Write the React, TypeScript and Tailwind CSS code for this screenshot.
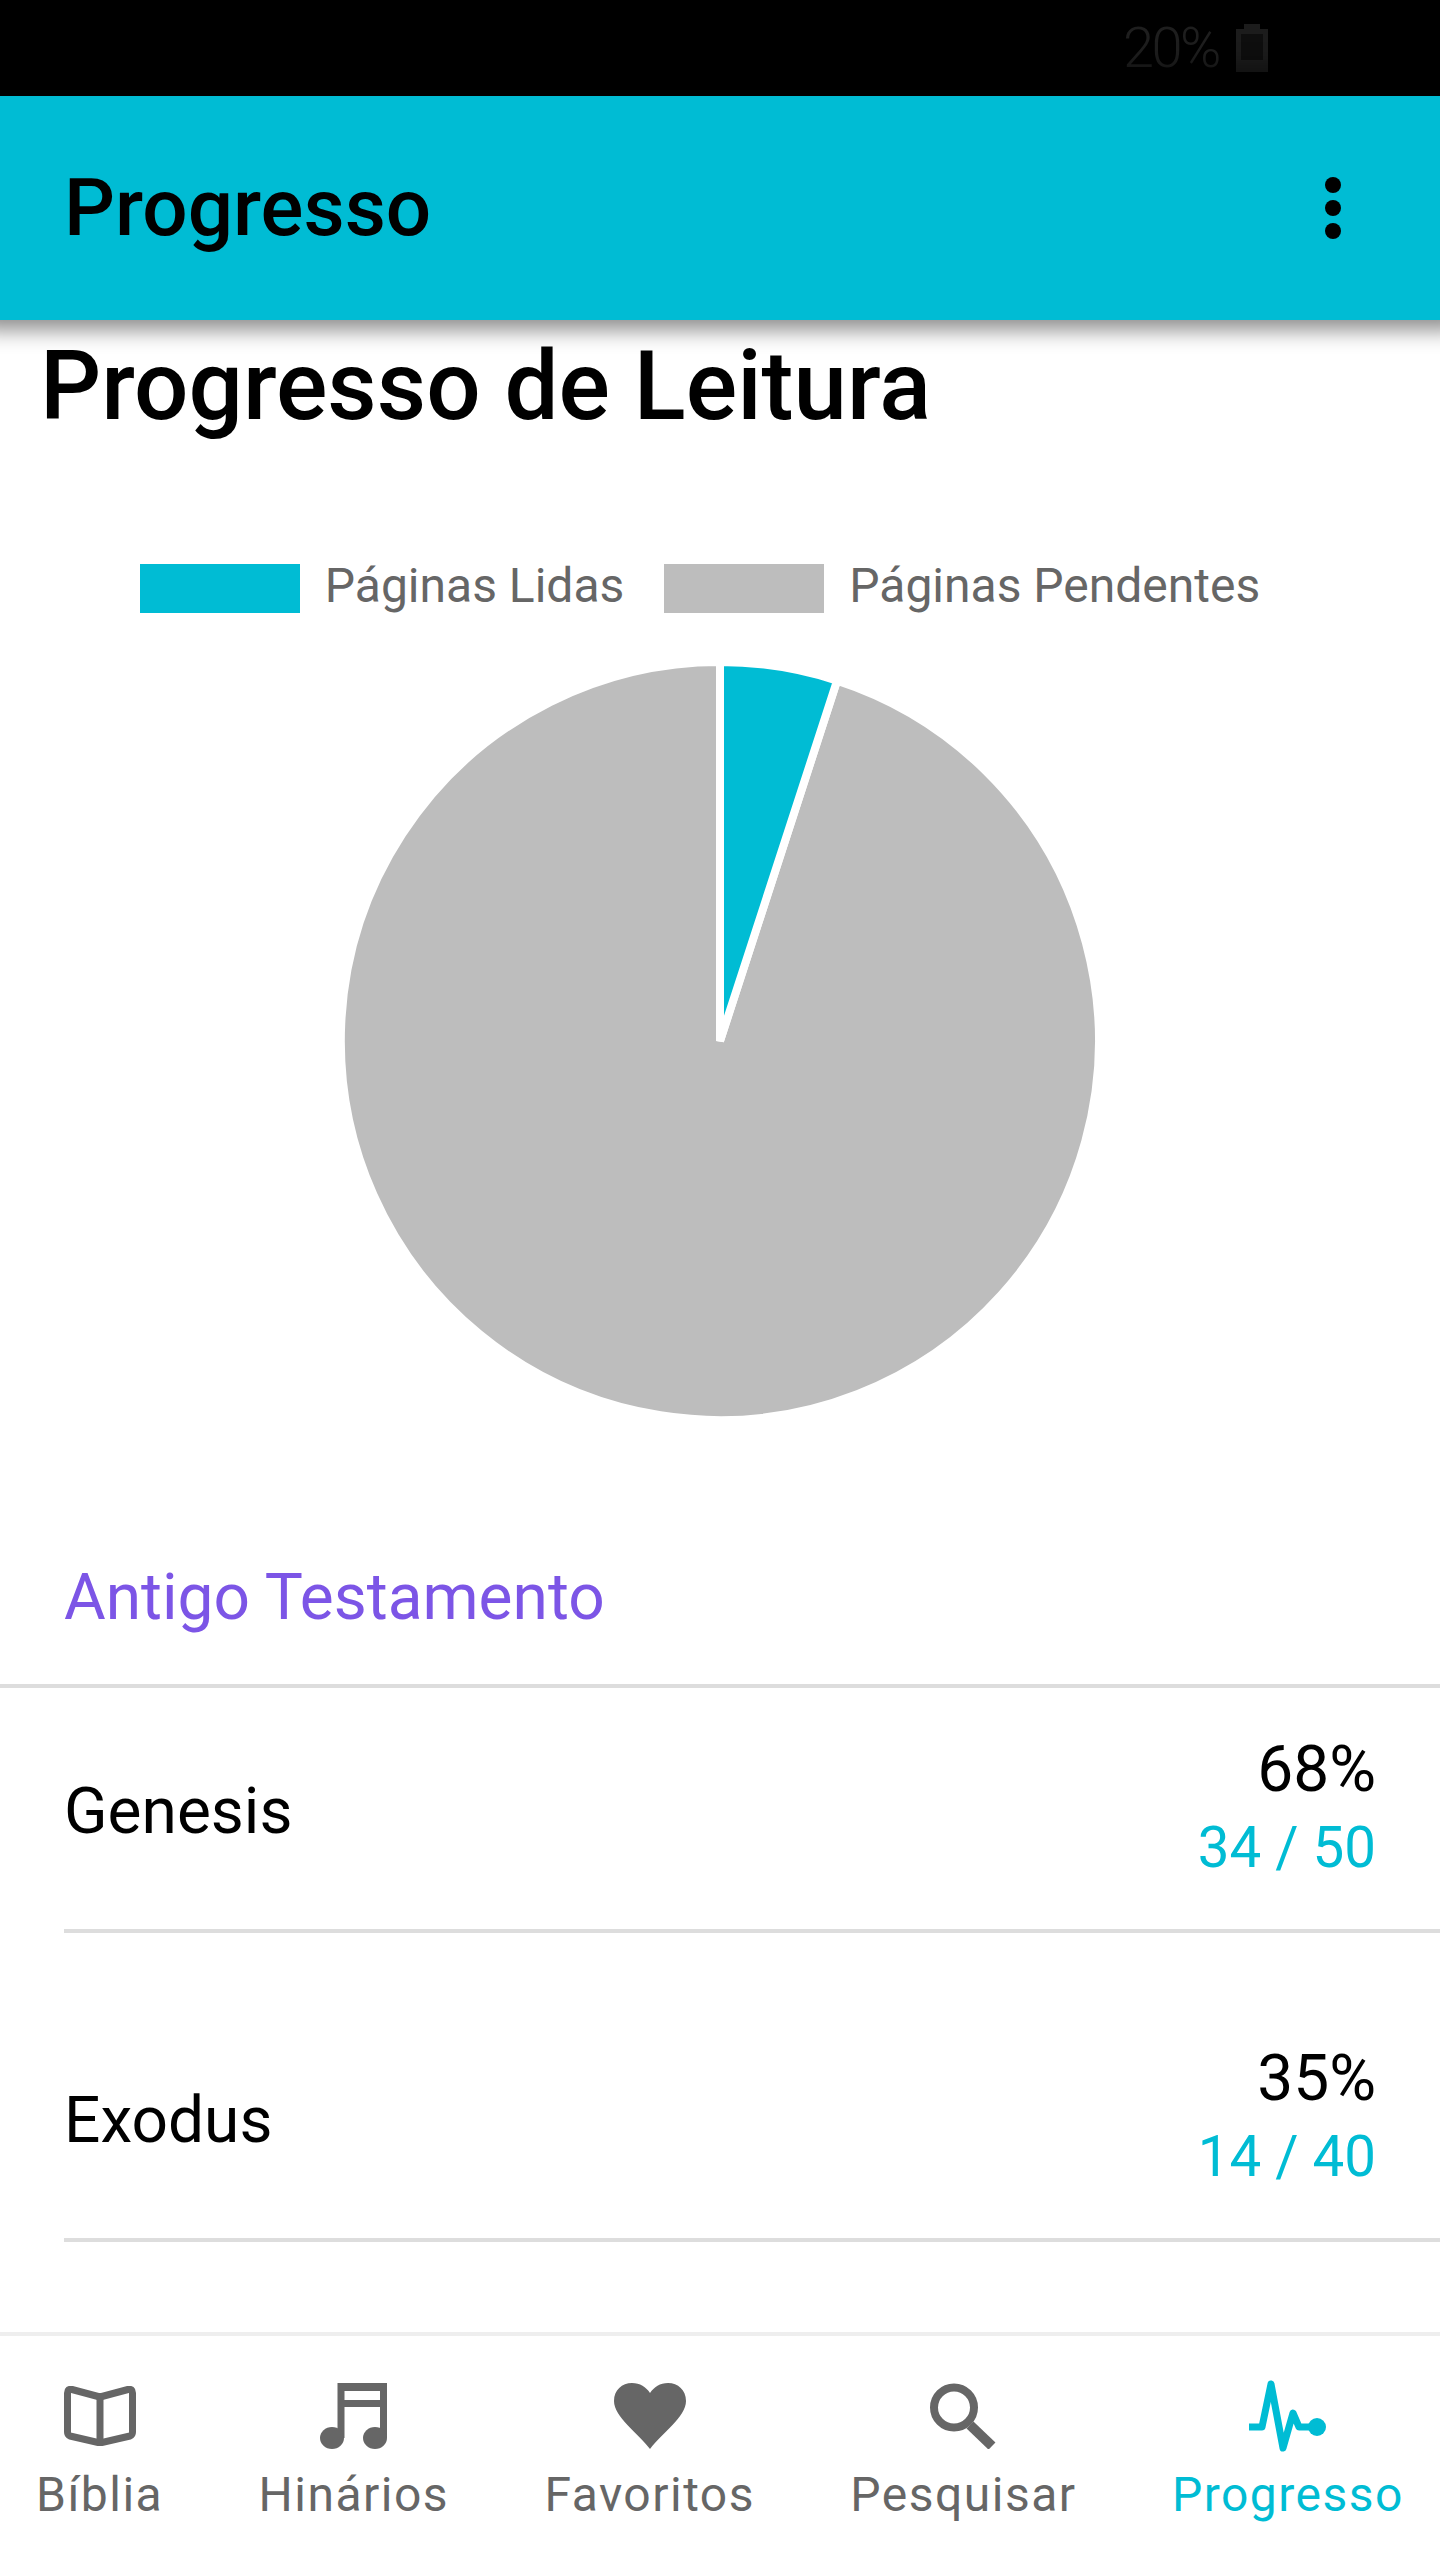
import React from "react";

const CYAN = "#00bcd4";
const GRAY = "#666666";

type Book = { name: string; percent: string; pages: string };

const books: Book[] = [
  { name: "Genesis", percent: "68%", pages: "34 / 50" },
  { name: "Exodus", percent: "35%", pages: "14 / 40" },
];

const BookIcon = () => (
  <svg width="72" height="60" viewBox="0 0 72 60" fill="none" stroke={GRAY} strokeWidth="7" strokeLinejoin="round">
    <path d="M36 11 L8 3.5 Q3.5 2.5 3.5 7 V46 Q3.5 49 6 50 L36 57 L66 50 Q68.5 49 68.5 46 V7 Q68.5 2.5 64 3.5 Z" />
    <path d="M36 11 V57" />
  </svg>
);

const MusicIcon = () => (
  <svg width="67" height="66" viewBox="0 0 67 66" fill={GRAY}>
    <path d="M17.5 0 H67 V55 H60 V24 H24.5 V55 H17.5 Z M24.5 8 V17 H60 V8 Z" fillRule="evenodd" />
    <ellipse cx="12" cy="55" rx="12" ry="11" />
    <ellipse cx="55" cy="55" rx="12" ry="11" />
  </svg>
);

const HeartIcon = () => (
  <svg width="72" height="66" viewBox="0 0 72 66" fill={GRAY}>
    <path d="M36 66 C24 50 0 34 0 18 C0 7 8 0 18 0 C26 0 32 4 36 10 C40 4 46 0 54 0 C64 0 72 7 72 18 C72 34 48 50 36 66 Z" />
  </svg>
);

const SearchIcon = () => (
  <svg width="66" height="66" viewBox="0 0 66 66" fill="none" stroke={GRAY}>
    <circle cx="24" cy="24.5" r="20" strokeWidth="8" />
    <path d="M40 42 L62 63" strokeWidth="10" />
  </svg>
);

const PulseIcon = () => (
  <svg width="77" height="72" viewBox="0 0 77 72" fill="none" stroke={CYAN} strokeWidth="7" strokeLinejoin="round" strokeLinecap="round">
    <path d="M1 47 H13 L22 4 L34 68 L44 33 L50 47 H63" />
    <circle cx="68" cy="47" r="9" fill={CYAN} stroke="none" />
  </svg>
);

// 5% slice starting at twelve o'clock, white edges separate the two parts
const PieChart = () => (
  <svg width="768" height="768" viewBox="0 0 768 768" className="block">
    <path d="M384 384 L501.1 23.6 A379 379 0 1 1 384 5 Z" fill="#bdbdbd" stroke="#ffffff" strokeWidth="8" />
    <path d="M384 384 L384 5 A379 379 0 0 1 501.1 23.6 Z" fill={CYAN} stroke="#ffffff" strokeWidth="8" />
  </svg>
);

const LegendItem = ({ color, label }: { color: string; label: string }) => (
  <div className="flex items-center gap-[25px]">
    <div className="h-[49px] w-[160px]" style={{ backgroundColor: color }} />
    <span className="mb-[6px] text-[48px] leading-[45px] text-[#666666]">{label}</span>
  </div>
);

const BookRow = ({ book }: { book: Book }) => (
  <div className="ml-[64px] flex h-[245px] items-center justify-between border-b-[4px] border-[#dddddd] pr-[64px]">
    <span className="mt-[6px] text-[64px] text-black">{book.name}</span>
    <div className="flex flex-col items-end">
      <span className="text-[64px] leading-[78px] text-black">{book.percent}</span>
      <span className="text-[56.5px] leading-[78px] text-[#00bcd4]">{book.pages}</span>
    </div>
  </div>
);

const NavItem = ({ icon, label, active }: { icon: React.ReactNode; label: string; active?: boolean }) => (
  <div className="flex flex-col items-center">
    <div className="flex h-[72px] items-center">{icon}</div>
    <span className={`mt-[15px] text-[48px] leading-[56px] tracking-[1.5px] ${active ? "text-[#00bcd4]" : "text-[#666666]"}`}>
      {label}
    </span>
  </div>
);

export default function App() {
  return (
    <div className="flex h-[2560px] w-[1440px] flex-col overflow-hidden bg-white font-['Roboto',sans-serif]">
      <div className="flex h-[96px] items-center justify-end gap-[17px] bg-black pr-[172px]">
        <span className="text-[56px] font-light tracking-[-2.5px] text-[#1e1e1e]">20%</span>
        <svg width="32" height="48" viewBox="0 0 32 48" fill="#1c1c1c">
          <path d="M8 0 H24 V5 H32 V48 H0 V5 H8 Z" />
          <rect x="5" y="10" width="22" height="26" fill="#0e0e0e" />
        </svg>
      </div>

      <header className="relative z-10 flex h-[224px] items-center justify-between bg-[#00bcd4] pl-[64px] pr-[99px] shadow-[0_-10px_20px_20px_rgba(0,0,0,0.45)]">
        <h1 className="text-[80px] font-medium text-black">Progresso</h1>
        <div className="flex flex-col gap-[7px]">
          <div className="h-[16px] w-[16px] rounded-full bg-black" />
          <div className="h-[16px] w-[16px] rounded-full bg-black" />
          <div className="h-[16px] w-[16px] rounded-full bg-black" />
        </div>
      </header>

      <main className="min-h-0 flex-1 overflow-hidden">
        <h2 className="pl-[40px] pt-[8px] text-[96px] font-medium leading-[116px] text-black">Progresso de Leitura</h2>
        <div className="mt-[119px] flex justify-center gap-[40px] pr-[40px]">
          <LegendItem color={CYAN} label="Páginas Lidas" />
          <LegendItem color="#bdbdbd" label="Páginas Pendentes" />
        </div>
        <div className="mt-[43px] flex justify-center">
          <PieChart />
        </div>
        <div className="mt-[135px] border-b-[4px] border-[#dddddd] pb-[49px] pl-[64px] text-[64px] leading-[75px] text-[#7c55e6]">
          Antigo Testamento
        </div>
        <div className="flex flex-col gap-[64px]">
          {books.map((book) => (
            <BookRow key={book.name} book={book} />
          ))}
        </div>
      </main>

      <nav className="flex h-[228px] justify-between border-t-[4px] border-[#eeeeee] bg-white pl-[36px] pr-[36px] pt-[44px]">
        <NavItem icon={<BookIcon />} label="Bíblia" />
        <NavItem icon={<MusicIcon />} label="Hinários" />
        <NavItem icon={<HeartIcon />} label="Favoritos" />
        <NavItem icon={<SearchIcon />} label="Pesquisar" />
        <NavItem icon={<PulseIcon />} label="Progresso" active />
      </nav>
    </div>
  );
}
